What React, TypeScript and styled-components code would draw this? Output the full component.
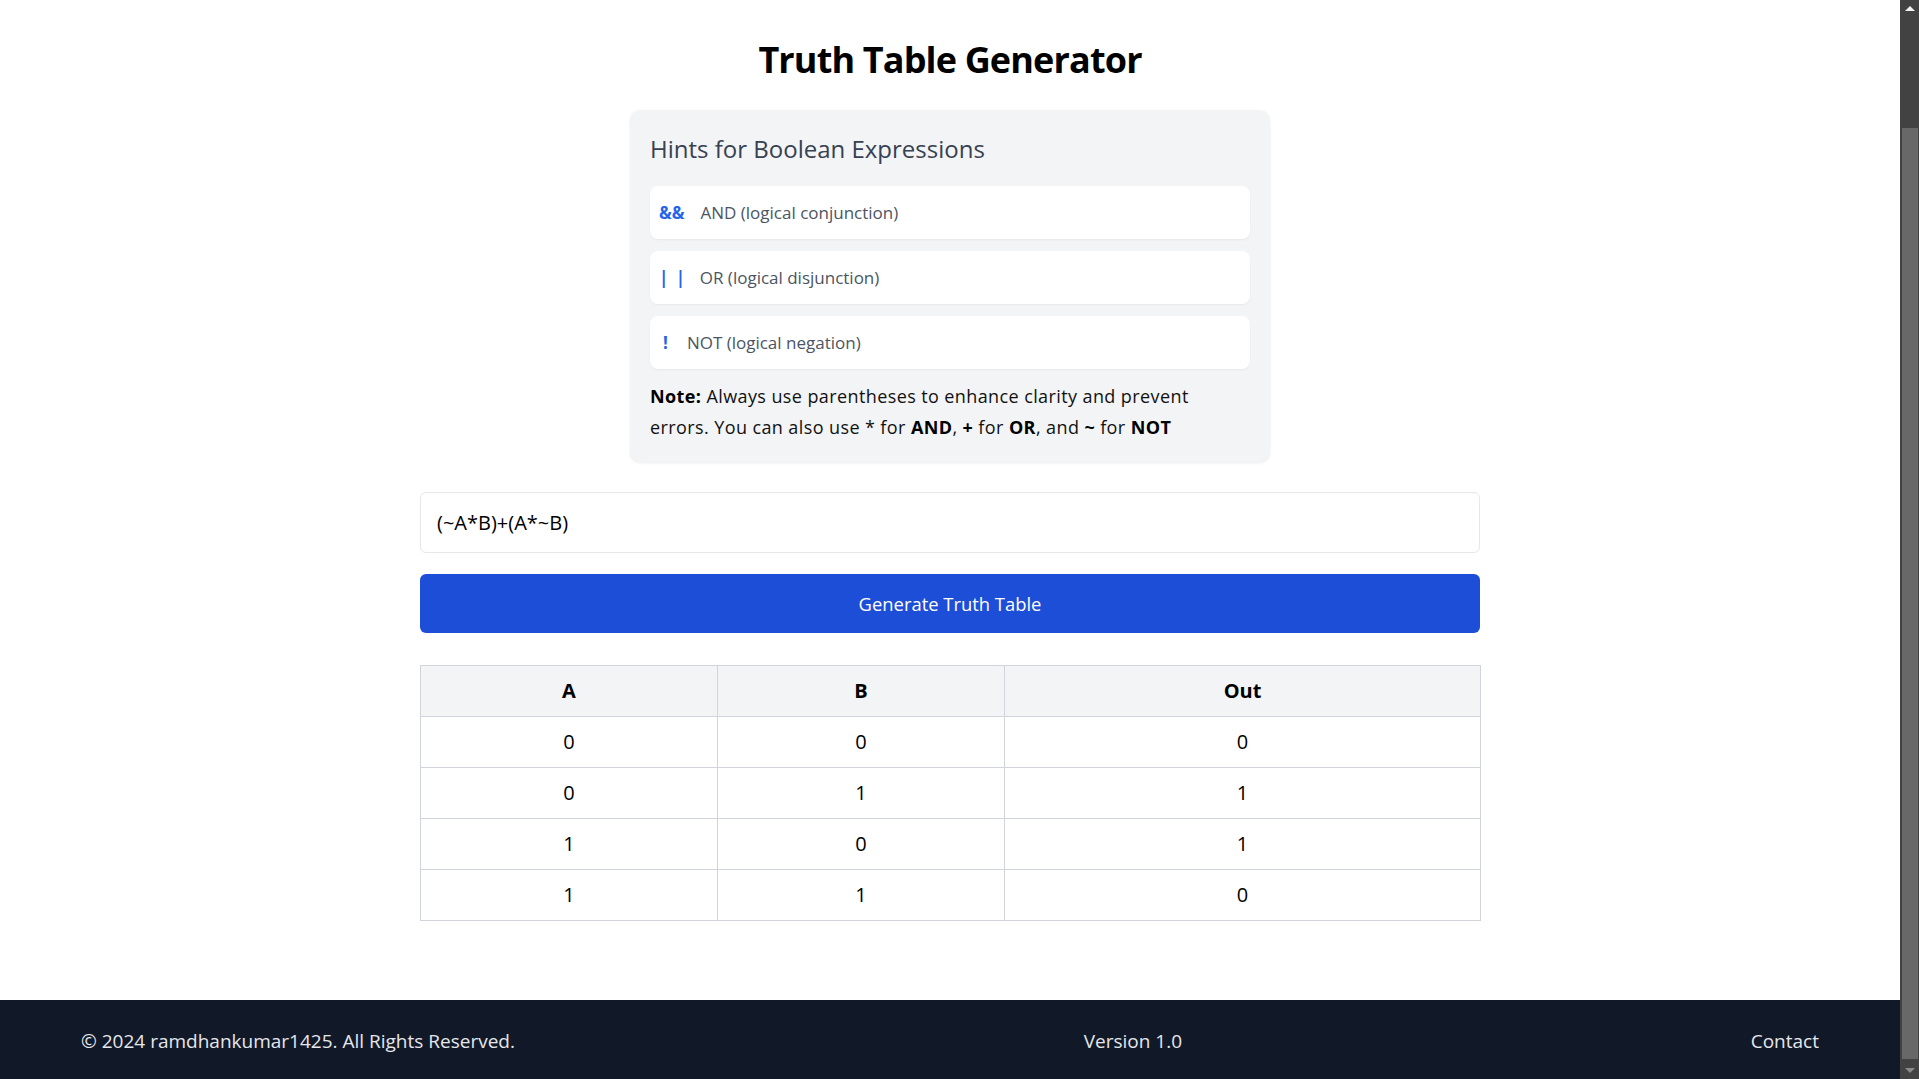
import React from "react";
import styled, { createGlobalStyle } from "styled-components";

const FONT = `"Open Sans", "Noto Sans", "Liberation Sans", sans-serif`;

const GlobalStyle = createGlobalStyle`
  *, *::before, *::after { box-sizing: border-box; }
  html { background: #ffffff; }
  body {
    margin: 0;
    font-family: ${FONT};
    color: #000000;
    background: #ffffff;
    overflow: hidden;
  }
`;

const Shell = styled.div`
  display: flex;
  min-height: 100vh;
`;

const Page = styled.div`
  flex: 1;
  min-height: 100vh;
  display: flex;
  flex-direction: column;
`;

/* drawing of the browser's (dark) scrollbar seen at the right edge */
const ScrollBar = styled.div`
  width: 19px;
  height: 100vh;
  flex-shrink: 0;
  display: flex;
  flex-direction: column;
  background: #424242;
`;

const ScrollArrow = styled.div<{ $down?: boolean }>`
  height: 17px;
  display: flex;
  align-items: center;
  justify-content: center;
  padding-left: 1px;

  &::before {
    content: "";
    width: 0;
    height: 0;
    border-left: 5px solid transparent;
    border-right: 5px solid transparent;
    ${(p) =>
      p.$down
        ? "border-top: 5px solid #8a8a8a;"
        : "border-bottom: 5px solid #f2f2f2;"}
  }
`;

const ScrollSpace = styled.div`
  height: 111px;
`;

const ScrollThumb = styled.div`
  flex: 1;
  margin: 0 1px 3px 2px;
  background: #686868;
`;

const Main = styled.main`
  flex: 1;
  display: flex;
  flex-direction: column;
  align-items: center;
  padding: 40px 0 60px;
`;

const Title = styled.h1`
  margin: 0 0 30px;
  font-size: 36px;
  line-height: 40px;
  font-weight: 700;
  letter-spacing: -0.85px;
  text-align: center;
  color: #000000;
`;

const HintCard = styled.section`
  width: 640px;
  padding: 20px;
  background: #f3f4f6;
  border-radius: 10px;
  box-shadow: 0 1px 3px rgba(0, 0, 0, 0.08);
  margin-bottom: 30px;
`;

const HintHeading = styled.h2`
  margin: 3px 0 21px;
  font-size: 24px;
  line-height: 32px;
  font-weight: 500;
  color: #374151;
`;

const HintList = styled.ul`
  list-style: none;
  margin: 0;
  padding: 0;
  display: flex;
  flex-direction: column;
  gap: 12px;
`;

const HintItem = styled.li`
  display: flex;
  align-items: center;
  height: 53px;
  padding: 0 8px;
  background: #ffffff;
  border-radius: 8px;
  box-shadow: 0 1px 2px rgba(0, 0, 0, 0.05);
`;

const HintSymbol = styled.span<{ $spread?: number; $inset?: number; $gap?: number }>`
  font-size: 17px;
  line-height: 28px;
  font-weight: 700;
  color: #2563eb;
  margin-left: ${(p) => p.$inset ?? 0}px;
  margin-right: ${(p) => p.$gap ?? 16}px;
  letter-spacing: ${(p) => p.$spread ?? 0}px;
`;

const HintText = styled.span`
  font-size: 17px;
  line-height: 28px;
  color: #4b5563;
`;

const Note = styled.p`
  max-width: 570px;
  margin: 12px 0 0;
  font-size: 18px;
  line-height: 30.6px;
  letter-spacing: 0.4px;
  color: #111111;

  strong {
    font-weight: 700;
    color: #000000;
  }
`;

const Form = styled.div`
  width: 1060px;
  display: flex;
  flex-direction: column;
`;

const ExprInput = styled.input`
  width: 100%;
  height: 61px;
  padding: 0 16px;
  font-family: ${FONT};
  font-size: 20px;
  color: #000000;
  background: #ffffff;
  border: 1px solid #e5e7eb;
  border-radius: 6px;
  outline: none;
  margin-bottom: 21px;
`;

const GenerateButton = styled.button`
  width: 100%;
  height: 59px;
  font-family: ${FONT};
  font-size: 18.4px;
  color: #ffffff;
  background: #1d4ed8;
  border: none;
  border-radius: 6px;
  cursor: pointer;
  margin-bottom: 32px;
`;

const Table = styled.table`
  width: 100%;
  border-collapse: collapse;
  table-layout: fixed;
`;

const HeadCell = styled.th<{ $w: number }>`
  width: ${(p) => p.$w}px;
  padding: 11px 16px;
  font-size: 20px;
  line-height: 28px;
  font-weight: 700;
  text-align: center;
  background: #f3f4f6;
  border: 1px solid #d1d5db;
`;

const Cell = styled.td`
  padding: 11px 16px;
  font-size: 20px;
  line-height: 28px;
  text-align: center;
  border: 1px solid #d1d5db;
`;

const Footer = styled.footer`
  height: 79px;
  display: flex;
  align-items: center;
  justify-content: space-between;
  padding: 3px 81px 0;
  background: #111827;
  color: #e5e7eb;
  font-size: 19px;
`;

const FooterItem = styled.span``;

const rows = [
  [0, 0, 0],
  [0, 1, 1],
  [1, 0, 1],
  [1, 1, 0],
];

export default function App() {
  return (
    <>
      <GlobalStyle />
      <Shell>
        <Page>
          <Main>
            <Title>Truth Table Generator</Title>
            <HintCard>
              <HintHeading>Hints for Boolean Expressions</HintHeading>
              <HintList>
                <HintItem>
                  <HintSymbol $inset={1}>&amp;&amp;</HintSymbol>
                  <HintText>AND (logical conjunction)</HintText>
                </HintItem>
                <HintItem>
                  <HintSymbol $inset={1} $spread={7.5} $gap={7}>||</HintSymbol>
                  <HintText>OR (logical disjunction)</HintText>
                </HintItem>
                <HintItem>
                  <HintSymbol $inset={5} $gap={19}>!</HintSymbol>
                  <HintText>NOT (logical negation)</HintText>
                </HintItem>
              </HintList>
              <Note>
                <strong>Note:</strong> Always use parentheses to enhance clarity and prevent errors. You can also use * for{" "}
                <strong>AND</strong>, <strong>+</strong> for <strong>OR</strong>, and <strong>~</strong> for{" "}
                <strong>NOT</strong>
              </Note>
            </HintCard>
            <Form>
              <ExprInput type="text" defaultValue="(~A*B)+(A*~B)" />
              <GenerateButton type="button">Generate Truth Table</GenerateButton>
              <Table>
                <thead>
                  <tr>
                    <HeadCell $w={297}>A</HeadCell>
                    <HeadCell $w={287}>B</HeadCell>
                    <HeadCell $w={476}>Out</HeadCell>
                  </tr>
                </thead>
                <tbody>
                  {rows.map((r, i) => (
                    <tr key={i}>
                      {r.map((v, j) => (
                        <Cell key={j}>{v}</Cell>
                      ))}
                    </tr>
                  ))}
                </tbody>
              </Table>
            </Form>
          </Main>
          <Footer>
            <FooterItem>© 2024 ramdhankumar1425. All Rights Reserved.</FooterItem>
            <FooterItem>Version 1.0</FooterItem>
            <FooterItem>Contact</FooterItem>
          </Footer>
        </Page>
        <ScrollBar aria-hidden="true">
          <ScrollArrow />
          <ScrollSpace />
          <ScrollThumb />
          <ScrollArrow $down />
        </ScrollBar>
      </Shell>
    </>
  );
}
